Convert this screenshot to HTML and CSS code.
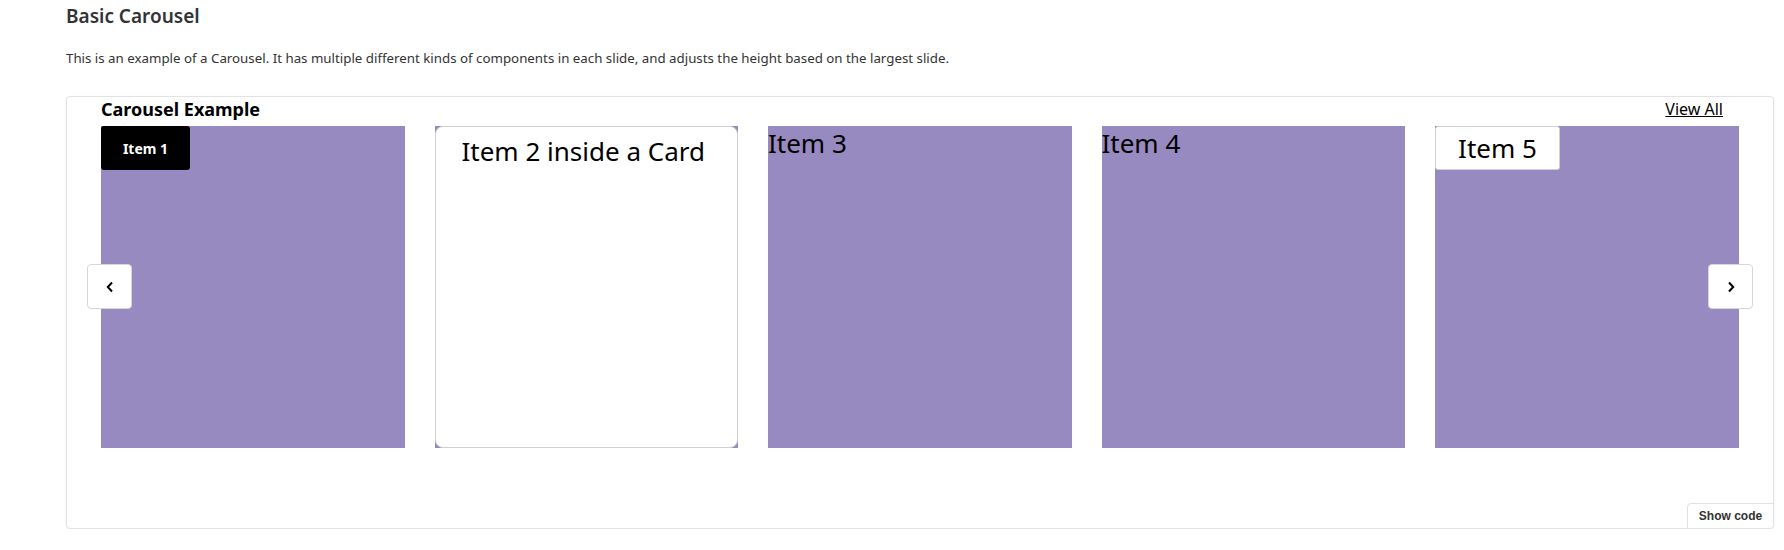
FILE: index.html
```html
<!DOCTYPE html>
<html>
<head>
<meta charset="utf-8">
<link rel="stylesheet" href="styles.css">
</head>
<body>
<div class="page">
  <h1 class="title">Basic Carousel</h1>
  <p class="desc">This is an example of a Carousel. It has multiple different kinds of components in each slide, and adjusts the height based on the largest slide.</p>
  <div class="example">
    <div class="carousel">
      <div class="carousel-head">
        <h2 class="carousel-title">Carousel Example</h2>
        <a class="view-all" href="#">View All</a>
      </div>
      <div class="track">
        <div class="slide"><div class="badge-dark">Item 1</div></div>
        <div class="slide"><div class="card">Item 2 inside a Card</div></div>
        <div class="slide"><div class="plain">Item 3</div></div>
        <div class="slide"><div class="plain">Item 4</div></div>
        <div class="slide"><div class="badge-light">Item 5</div></div>
      </div>
      <div class="spacer"></div>
    </div>
    <button class="arrow arrow-prev" aria-label="Previous">
      <svg width="10" height="12" viewBox="0 0 10 12"><path d="M7 1.5 L2.8 6 L7 10.5" fill="none" stroke="#000" stroke-width="2"/></svg>
    </button>
    <button class="arrow arrow-next" aria-label="Next">
      <svg width="10" height="12" viewBox="0 0 10 12"><path d="M3 1.5 L7.2 6 L3 10.5" fill="none" stroke="#000" stroke-width="2"/></svg>
    </button>
    <button class="show-code">Show code</button>
  </div>
</div>
</body>
</html>
```

FILE: styles.css
```css
* { box-sizing: border-box; }
html, body { margin: 0; padding: 0; background: #fff; }
body { font-family: "Noto Sans", "Liberation Sans", sans-serif; color: #161616; }
.page { padding: 3px 10px 0 66px; }
.title { margin: 0; font-size: 19px; line-height: 26px; font-weight: 600; color: #333; }
.desc { margin: 19px 0 0; font-size: 13.3px; line-height: 20px; color: #333; }
.example {
  position: relative;
  margin-top: 28px;
  width: 1708px;
  height: 433px;
  border: 1px solid #e2e2e2;
  border-radius: 4px;
  box-shadow: 0 1px 3px rgba(0,0,0,0.06);
  background: #fff;
}
.carousel { padding: 0 34px; }
.carousel-head {
  display: flex;
  justify-content: space-between;
  align-items: flex-start;
  height: 29px;
  padding-right: 16px;
}
.carousel-title { margin: 0; font-size: 18px; line-height: 24px; font-weight: 700; color: #000; }
.view-all { font-size: 16px; line-height: 24px; color: #000; text-decoration: underline; }
.track { display: flex; gap: 30px; }
.slide {
  width: 303.5px;
  height: 322px;
  flex: none;
  background: #978ac0;
}
.badge-dark {
  display: inline-flex;
  align-items: center;
  justify-content: center;
  width: 89px;
  height: 44px;
  background: #000;
  color: #fff;
  font-size: 14px;
  font-weight: 700;
  border-radius: 3px;
}
.card {
  height: 100%;
  background: #fff;
  border: 1px solid #cfcfd4;
  border-radius: 8px;
  font-size: 26px;
  line-height: 36px;
  text-align: center;
  padding-top: 6px;
  padding-right: 6px;
  color: #000;
}
.plain { font-size: 26px; line-height: 34px; color: #000; }
.badge-light {
  display: inline-flex;
  align-items: center;
  justify-content: center;
  width: 125px;
  height: 44px;
  background: #fff;
  border: 1px solid #d0d0d0;
  border-radius: 3px;
  font-size: 26px;
  color: #000;
}
.arrow {
  position: absolute;
  top: 167px;
  width: 45px;
  height: 45px;
  display: flex;
  align-items: center;
  justify-content: center;
  background: #fff;
  border: 1px solid #d6d6d6;
  border-radius: 4px;
  padding: 0;
}
.arrow-prev { left: 20px; }
.arrow-next { right: 20px; }
.show-code {
  position: absolute;
  right: -1px;
  bottom: -1px;
  width: 87px;
  height: 26px;
  background: #fff;
  border: 1px solid #e2e2e2;
  border-radius: 4px 0 4px 0;
  font-family: "Liberation Sans", Arial, sans-serif;
  font-size: 12px;
  font-weight: 700;
  color: #333;
  padding: 0;
}
```
